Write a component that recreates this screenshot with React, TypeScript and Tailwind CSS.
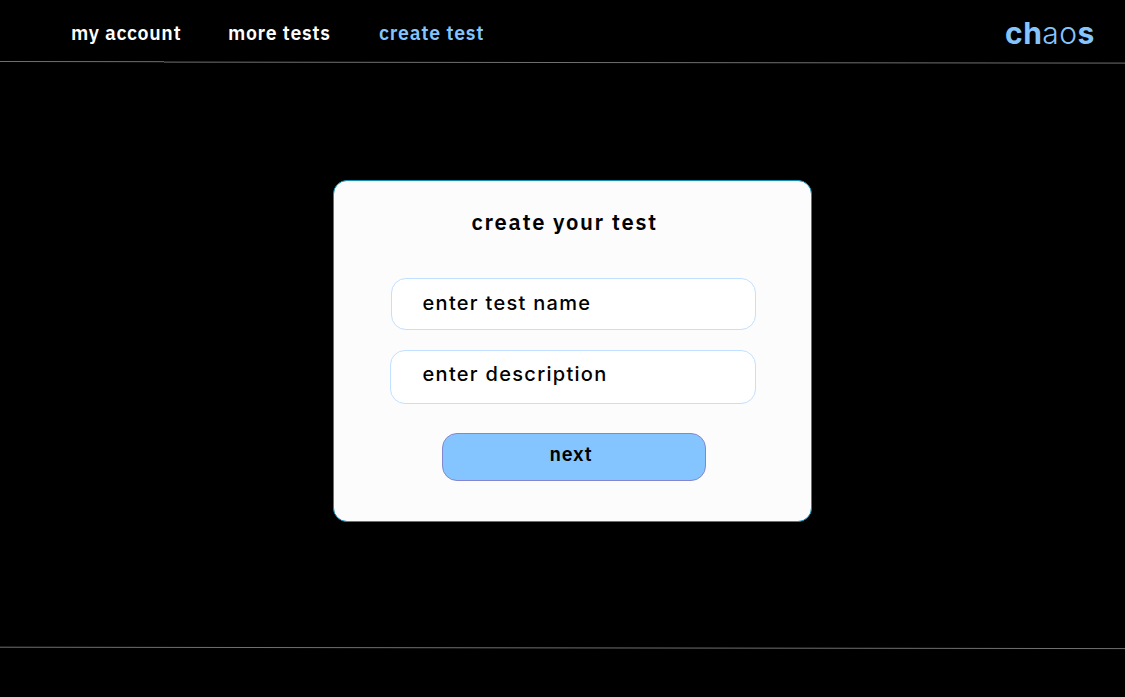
import React from "react";

function Divider({ points }: { points: number[][] }) {
  return (
    <svg className="block h-[4px] w-full" viewBox="0 0 1125 4" preserveAspectRatio="none">
      {points.map(([x1, y1, x2, y2]) => (
        <line key={x1} x1={x1} y1={y1} x2={x2} y2={y2} stroke="#707070" strokeWidth="1" />
      ))}
    </svg>
  );
}

export default function App() {
  return (
    <div className="flex h-[697px] w-[1125px] flex-col overflow-hidden bg-black font-[Inter,sans-serif] text-black">
      <header className="flex h-[60px] shrink-0 items-start justify-between pl-[71px] pr-[29px]">
        <nav className="flex whitespace-nowrap pt-[19px] font-['IBM_Plex_Sans','Noto_Sans',sans-serif] text-[19.5px] leading-[28px] font-semibold text-white">
          <a className="w-[157px] tracking-[0.65px]">my account</a>
          <a className="w-[151px] tracking-[0.65px]">more tests</a>
          <a className="tracking-[0.75px] text-[#85c5ff]">create test</a>
        </nav>
        <div className="w-[91px] whitespace-nowrap pt-[15px] text-[30px] leading-[36px] font-bold tracking-[0.5px] text-[#85c5ff]">
          ch<span className="font-light">ao</span>s
        </div>
      </header>
      <Divider points={[[0, 1.5, 164, 1.7], [164, 2.1, 1125, 3.1]]} />
      <main className="flex h-[582px] shrink-0 items-start pt-[116px] pl-[333px]">
        <section className="flex h-[342px] w-[479px] flex-col rounded-[14px] border border-[#168fb5] bg-[#fcfcfc] pt-[25px] pl-[57px]">
          <h1 className="pl-[80.5px] whitespace-nowrap font-['IBM_Plex_Sans','Noto_Sans',sans-serif] text-[22px] leading-[32px] font-semibold tracking-[1.65px]">
            create your test
          </h1>
          <div className="mt-[40px] flex h-[52px] w-[365px] rounded-[15px] border border-[#c2e0ff] bg-white pt-[10px] pl-[30.5px] text-[20px] leading-[28px] font-medium tracking-[1.3px]">
            enter test name
          </div>
          <div className="mt-[20px] -ml-[1px] flex h-[54px] w-[366px] rounded-[15px] border border-[#c2e0ff] bg-white pt-[9px] pl-[31.5px] text-[20px] leading-[28px] font-medium tracking-[1.3px]">
            enter description
          </div>
          <button className="mt-[29px] ml-[51px] flex h-[48px] w-[264px] justify-start rounded-[15px] border border-[#8587ce] bg-[#85c5ff] pt-[6px] pl-[106.5px] font-['IBM_Plex_Sans','Noto_Sans',sans-serif] text-[19.5px] leading-[28px] font-semibold tracking-[0.75px]">
            next
          </button>
        </section>
      </main>
      <Divider points={[[0, 1.2, 1125, 2.6]]} />
    </div>
  );
}
